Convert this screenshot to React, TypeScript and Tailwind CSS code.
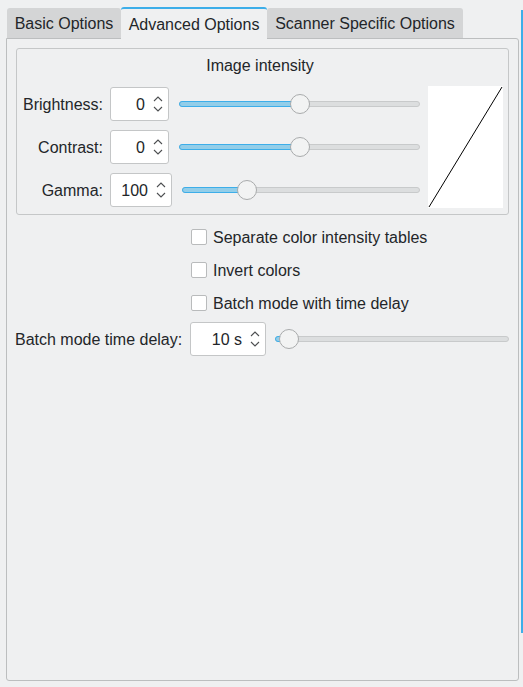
import React from 'react'

const tabs = [
  { label: 'Basic Options', width: 'w-[114px]', active: false },
  { label: 'Advanced Options', width: 'w-[146px]', active: true },
  { label: 'Scanner Specific Options', width: 'w-[196px]', active: false },
]

function SpinArrows() {
  return (
    <svg width="12" height="22" viewBox="0 0 12 22" className="shrink-0">
      <path d="M2 8 L6 4 L10 8" fill="none" stroke="#4d4f51" strokeWidth="1.1" />
      <path d="M2 14 L6 18 L10 14" fill="none" stroke="#4d4f51" strokeWidth="1.1" />
    </svg>
  )
}

function SpinBox({ value, width }: { value: string; width: string }) {
  return (
    <div className={`${width} h-[34px] shrink-0 bg-white border border-[#c4c6c7] rounded-[3px] flex items-center justify-end pr-[4px]`}>
      <span className="pr-[7px] pt-[2px]">{value}</span>
      <SpinArrows />
    </div>
  )
}

function Slider({ fraction }: { fraction: number }) {
  return (
    <div className="relative flex-1 h-[20px] flex items-center">
      <div className="w-full h-[6px] rounded-full bg-[#dcdedf] border border-[#c8cacb]" />
      <div
        className="absolute left-0 h-[6px] rounded-l-full bg-[#93cee9] border border-[#3daee9]"
        style={{ width: `calc(${fraction} * (100% - 20px) + 10px)` }}
      />
      <div
        className="absolute w-[20px] h-[20px] rounded-full bg-[#f2f3f3] border border-[#a9abac]"
        style={{ left: `calc(${fraction} * (100% - 20px))` }}
      />
    </div>
  )
}

function Checkbox({ label }: { label: string }) {
  return (
    <div className="h-[33px] flex items-center ml-[184px] gap-[6px]">
      <div className="w-[16px] h-[16px] bg-white border border-[#b9bbbc] rounded-[2px]" />
      <span className="pt-[2px]">{label}</span>
    </div>
  )
}

const rows = [
  { label: 'Brightness:', value: '0', spin: 'w-[59px]', fraction: 0.5 },
  { label: 'Contrast:', value: '0', spin: 'w-[59px]', fraction: 0.5 },
  { label: 'Gamma:', value: '100', spin: 'w-[62px]', fraction: 0.25 },
]

export default function App() {
  return (
    <div className="w-[523px] h-[687px] bg-[#eff0f1] flex text-[16px] leading-[20px] text-[#232629] font-['Liberation_Sans',Arial,sans-serif] overflow-hidden">
      <div className="w-[519px] pl-[6px] pt-[7px] pb-[6px] flex flex-col">
        <div className="flex h-[31px] pl-[1px]">
          {tabs.map((t) =>
            t.active ? (
              <div key={t.label} className={`${t.width} bg-[#eff0f1] border-t-2 border-[#3daee9] rounded-t-[3px] flex items-center justify-center pt-[2px] relative z-10 -mb-px`}>
                {t.label}
              </div>
            ) : (
              <div key={t.label} className={`${t.width} bg-[#d4d5d6] rounded-t-[3px] flex items-center justify-center pt-[2px] mt-px`}>
                {t.label}
              </div>
            )
          )}
        </div>
        <div className="flex-1 w-[513px] border border-[#bcbebf] rounded-b-[3px] rounded-tr-[3px] pt-[9px] px-[9px]">
          <div className="border border-[#c5c7c8] rounded-[3px] pt-[6px] pb-[6px] pr-[5px]">
            <div className="h-[20px] pt-[1px] text-center">Image intensity</div>
            <div className="flex mt-[11px] gap-[8px]">
              <div className="flex-1 flex flex-col gap-[9px] pt-[1px]">
                {rows.map((r) => (
                  <div key={r.label} className="flex items-center h-[34px]">
                    <div className="w-[86px] pt-[2px] text-right shrink-0">{r.label}</div>
                    <div className="ml-[7px]">
                      <SpinBox value={r.value} width={r.spin} />
                    </div>
                    <div className="flex-1 flex ml-[10px]">
                      <Slider fraction={r.fraction} />
                    </div>
                  </div>
                ))}
              </div>
              <div className="w-[75px] h-[122px] bg-white shrink-0">
                <svg width="75" height="122" viewBox="0 0 75 122">
                  <line x1="1" y1="121" x2="74" y2="1" stroke="#000" strokeWidth="1" />
                </svg>
              </div>
            </div>
          </div>
          <div className="mt-[5px] -ml-[9px]">
            <Checkbox label="Separate color intensity tables" />
            <Checkbox label="Invert colors" />
            <Checkbox label="Batch mode with time delay" />
          </div>
          <div className="mt-[3px] h-[34px] flex items-center">
            <span className="w-[175px] pt-[2px] shrink-0 -ml-px">Batch mode time delay:</span>
            <div>
              <SpinBox value="10 s" width="w-[76px]" />
            </div>
            <div className="flex-1 flex ml-[9px]">
              <Slider fraction={0.02} />
            </div>
          </div>
        </div>
      </div>
      <div className="ml-[2px] mt-[10px] w-[2px] h-[623px] bg-[#3daee9]" />
    </div>
  )
}
